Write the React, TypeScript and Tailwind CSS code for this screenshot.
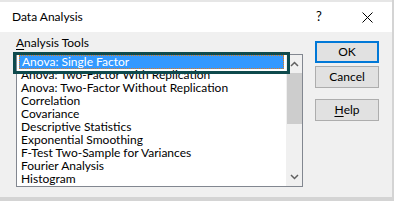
import React from 'react';

const tools = [
  'Anova: Single Factor',
  'Anova: Two-Factor With Replication',
  'Anova: Two-Factor Without Replication',
  'Correlation',
  'Covariance',
  'Descriptive Statistics',
  'Exponential Smoothing',
  'F-Test Two-Sample for Variances',
  'Fourier Analysis',
  'Histogram',
];

function DialogButton({ label, hot, primary }: { label: string; hot?: number; primary?: boolean }) {
  const chars = label.split('');
  return (
    <button
      className={
        'w-[64px] h-[22px] bg-[#e1e1e1] text-[12px] leading-none text-black flex items-center justify-center ' +
        (primary ? 'border-2 border-[#0078d7]' : 'border border-[#adadad]')
      }
    >
      {chars.map((c, i) =>
        i === hot ? (
          <span key={i} className="underline underline-offset-2">
            {c}
          </span>
        ) : (
          <span key={i}>{c}</span>
        )
      )}
    </button>
  );
}

export default function App() {
  return (
    <div
      className="w-[394px] h-[201px] bg-[#d4d4d4] overflow-hidden"
      style={{ fontFamily: 'Lato, "Noto Sans", sans-serif' }}
    >
      <div className="w-[392px] h-[197px] flex flex-col bg-[#f0f0f0] border-t-2 border-[#e6e6e6]">
        {/* Title bar */}
        <div className="h-[30px] bg-white flex items-center shrink-0">
          <span className="pl-[12px] text-[12px] text-black">Data Analysis</span>
          <span className="ml-auto w-[10px] text-[13px] text-black mr-[36px]">?</span>
          <svg width="11" height="11" viewBox="0 0 11 11" className="mr-[19px]">
            <path d="M0.5 0.5L10.5 10.5M10.5 0.5L0.5 10.5" stroke="#000" strokeWidth="1" />
          </svg>
        </div>

        {/* Body */}
        <div className="flex pl-[16px] pt-[3px]">
          <div className="flex flex-col">
            <div className="h-[19px] text-[12px] leading-[16px] text-black">
              <span className="underline underline-offset-2">A</span>nalysis Tools
            </div>
            <div className="relative w-[287px] h-[133px] border border-[#828790] bg-white flex">
              <div className="flex-1 flex flex-col">
                {tools.map((t, i) => (
                  <div key={t} className="h-[13px] flex items-center">
                    {i === 0 ? (
                      <div className="ml-[2px] w-[265px] h-[14px] mt-[1px] bg-[#3399ff] border border-dotted border-[#e07a1e] text-white text-[12px] leading-[12px] flex items-center pl-[2px]">
                        {t}
                      </div>
                    ) : (
                      <span className="pl-[4px] text-[12px] leading-[13px] text-black whitespace-nowrap">{t}</span>
                    )}
                  </div>
                ))}
              </div>
              {/* Scrollbar */}
              <div className="w-[16px] h-full bg-[#f0f0f0] flex flex-col items-center">
                <div className="h-[18px] flex items-center justify-center">
                  <svg width="9" height="6" viewBox="0 0 9 6">
                    <path d="M1 5L4.5 1.5L8 5" fill="none" stroke="#606060" strokeWidth="1.5" />
                  </svg>
                </div>
                <div className="w-[15px] h-[51px] bg-[#cdcdcd]" />
                <div className="flex-1" />
                <div className="h-[18px] flex items-center justify-center">
                  <svg width="9" height="6" viewBox="0 0 9 6">
                    <path d="M1 1L4.5 4.5L8 1" fill="none" stroke="#606060" strokeWidth="1.5" />
                  </svg>
                </div>
              </div>
              {/* highlight annotation */}
              <div className="absolute left-[-4px] top-[-3px] w-[277px] h-[22px] border-[3px] border-[#0f4a4d] pointer-events-none" />
            </div>
          </div>

          <div className="ml-[12px] pt-[6px] flex flex-col">
            <DialogButton label="OK" primary />
            <div className="h-[3px]" />
            <DialogButton label="Cancel" />
            <div className="h-[11px]" />
            <DialogButton label="Help" hot={0} />
          </div>
        </div>
      </div>
    </div>
  );
}
